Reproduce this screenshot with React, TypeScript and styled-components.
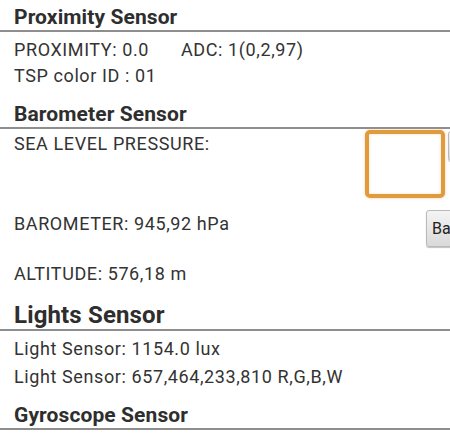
import React from "react";
import styled, { createGlobalStyle } from "styled-components";

const Global = createGlobalStyle`
  html, body { margin: 0; padding: 0; background: #ffffff; }
  body { font-family: Roboto, "Noto Sans", "Liberation Sans", sans-serif; color: #333333; }
`;

const Page = styled.div`
  width: 450px;
  height: 435px;
  overflow: hidden;
  background: #ffffff;
  padding-top: 5px;
  box-sizing: border-box;
`;

const Heading = styled.div<{ $big?: boolean; $gap?: number }>`
  margin-top: ${(p) => p.$gap ?? 0}px;
  padding-left: 14px;
  font-weight: 700;
  font-size: ${(p) => (p.$big ? 24 : 21)}px;
  line-height: ${(p) => (p.$big ? 28 : 25)}px;
  letter-spacing: ${(p) => (p.$big ? 0.15 : 0.1)}px;
  color: #2e2e2e;
  border-bottom: 2px solid #8e8e8e;
  white-space: nowrap;
`;

const Row = styled.div<{ $gap?: number; $lh?: number }>`
  display: flex;
  align-items: flex-start;
  padding-left: 14px;
  margin-top: ${(p) => p.$gap ?? 0}px;
  font-size: 18px;
  letter-spacing: 0.6px;
  line-height: ${(p) => p.$lh ?? 26}px;
  color: #333333;
  white-space: nowrap;
`;

const Label = styled.span<{ $offset?: number }>`
  flex: 1;
  margin-top: ${(p) => p.$offset ?? 0}px;
`;

const Pair = styled.span`
  display: inline-block;
  width: 167px;
`;

const RightGroup = styled.div<{ $overhang: number }>`
  display: flex;
  align-items: flex-start;
  gap: 3px;
  flex-shrink: 0;
  margin-right: -${(p) => p.$overhang}px;
`;

const InputBox = styled.div`
  width: 80px;
  height: 68px;
  margin-top: 1px;
  box-sizing: border-box;
  border: 4px solid #e19a3c;
  border-radius: 5px;
  background: #ffffff;
  box-shadow: 0 0 3px rgba(240, 170, 80, 0.55), inset 0 0 3px rgba(240, 170, 80, 0.35);
`;

const SideButton = styled.div<{ $h: number; $mt?: number }>`
  width: 44px;
  height: ${(p) => p.$h}px;
  margin-top: ${(p) => p.$mt ?? 0}px;
  box-sizing: border-box;
  border: 1px solid #b9b9b9;
  border-radius: 3px;
  background: linear-gradient(#f4f4f4, #d9d9d9);
  box-shadow: 0 1px 1px rgba(0, 0, 0, 0.25);
  font-size: 16px;
  letter-spacing: 0;
  line-height: ${(p) => p.$h - 2}px;
  padding-left: 5px;
  color: #222222;
  flex-shrink: 0;
`;

export default function App() {
  return (
    <>
      <Global />
      <Page>
        <Heading>Proximity Sensor</Heading>
        <Row $gap={5}>
          <Pair>PROXIMITY: 0.0</Pair>
          <span>ADC: 1(0,2,97)</span>
        </Row>
        <Row>TSP color ID : 01</Row>

        <Heading $gap={13}>Barometer Sensor</Heading>
        <Row>
          <Label $offset={2}>SEA LEVEL PRESSURE:</Label>
          <RightGroup $overhang={42}>
            <InputBox />
            <SideButton $h={30} $mt={2} />
          </RightGroup>
        </Row>
        <Row $gap={12}>
          <Label $offset={1}>BAROMETER: 945,92 hPa</Label>
          <RightGroup $overhang={20}>
            <SideButton $h={37}>Ba</SideButton>
          </RightGroup>
        </Row>
        <Row $gap={14}>ALTITUDE: 576,18 m</Row>

        <Heading $big $gap={14}>Lights Sensor</Heading>
        <Row $gap={4} $lh={28}>Light Sensor: 1154.0 lux</Row>
        <Row $lh={28}>Light Sensor: 657,464,233,810 R,G,B,W</Row>

        <Heading $gap={12}>Gyroscope Sensor</Heading>
      </Page>
    </>
  );
}
